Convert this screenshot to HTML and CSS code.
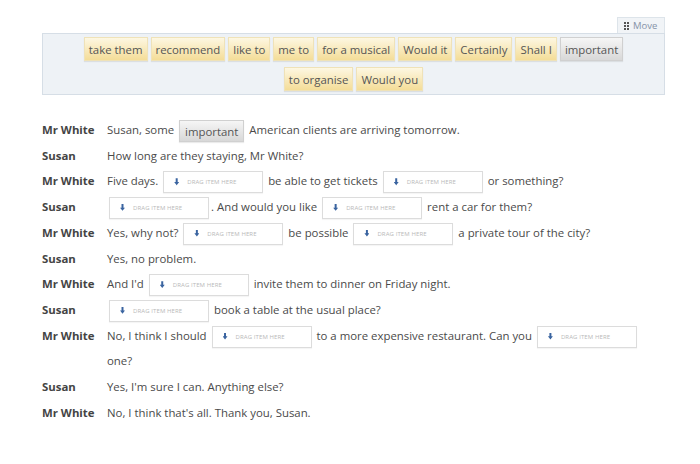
FILE: index.html
```html
<!DOCTYPE html>
<html lang="en">
<head>
    <meta charset="UTF-8">
    <title>Dialogue - drag and drop</title>
    <link rel="stylesheet" href="styles.css">
</head>
<body>
    <div class="page">
        <div class="options-wrap">
            <div class="move-tab">
                <svg class="grip" width="5" height="8" viewBox="0 0 5 8">
                    <rect x="0" y="0" width="2" height="2"/><rect x="3" y="0" width="2" height="2"/>
                    <rect x="0" y="3" width="2" height="2"/><rect x="3" y="3" width="2" height="2"/>
                    <rect x="0" y="6" width="2" height="2"/><rect x="3" y="6" width="2" height="2"/>
                </svg>
                Move
            </div>
            <div class="options">
                <span class="item">take them</span>
                <span class="item">recommend</span>
                <span class="item">like to</span>
                <span class="item">me to</span>
                <span class="item">for a musical</span>
                <span class="item">Would it</span>
                <span class="item">Certainly</span>
                <span class="item">Shall I</span>
                <span class="item used">important</span>
                <span class="item">to organise</span>
                <span class="item">Would you</span>
            </div>
        </div>

        <div class="dialogue">
            <div class="speaker">Mr White</div>
            <div class="line">Susan, some <span class="item used placed">important</span> American clients are arriving tomorrow.</div>

            <div class="speaker">Susan</div>
            <div class="line">How long are they staying, Mr White?</div>

            <div class="speaker">Mr White</div>
            <div class="line">Five days. <span class="drop"><i class="arrow"></i>Drag item here</span> be able to get tickets <span class="drop"><i class="arrow"></i>Drag item here</span> or something?</div>

            <div class="speaker">Susan</div>
            <div class="line"><span class="drop"><i class="arrow"></i>Drag item here</span>. And would you like <span class="drop"><i class="arrow"></i>Drag item here</span> rent a car for them?</div>

            <div class="speaker">Mr White</div>
            <div class="line">Yes, why not? <span class="drop"><i class="arrow"></i>Drag item here</span> be possible <span class="drop"><i class="arrow"></i>Drag item here</span> a private tour of the city?</div>

            <div class="speaker">Susan</div>
            <div class="line">Yes, no problem.</div>

            <div class="speaker">Mr White</div>
            <div class="line">And I'd <span class="drop"><i class="arrow"></i>Drag item here</span> invite them to dinner on Friday night.</div>

            <div class="speaker">Susan</div>
            <div class="line"><span class="drop"><i class="arrow"></i>Drag item here</span> book a table at the usual place?</div>

            <div class="speaker">Mr White</div>
            <div class="line">No, I think I should <span class="drop"><i class="arrow"></i>Drag item here</span> to a more expensive restaurant. Can you <span class="drop"><i class="arrow"></i>Drag item here</span> one?</div>

            <div class="speaker">Susan</div>
            <div class="line">Yes, I'm sure I can. Anything else?</div>

            <div class="speaker">Mr White</div>
            <div class="line">No, I think that's all. Thank you, Susan.</div>
        </div>
    </div>
</body>
</html>
```

FILE: styles.css
```css
* {
    margin: 0;
    padding: 0;
    box-sizing: border-box;
}

body {
    font-family: 'Open Sans', 'Noto Sans', sans-serif;
    font-size: 11.4px;
    color: #4a4a4a;
    background: #fff;
}

.page {
    width: 623px;
    margin-left: 42px;
    padding-top: 17px;
}

/* draggable words */
.options-wrap {
    display: flex;
    flex-direction: column;
    align-items: flex-end;
}

.move-tab {
    display: flex;
    align-items: center;
    gap: 4px;
    height: 16px;
    width: 48px;
    padding-left: 6px;
    background: #f1f4f7;
    border: 1px solid #dde4ea;
    border-bottom: none;
    font-size: 9.5px;
    color: #8593a8;
}

.grip {
    fill: #555;
}

.options {
    width: 100%;
    display: flex;
    flex-wrap: wrap;
    justify-content: center;
    gap: 6px 3px;
    padding: 3px 8px;
    background: #eef2f6;
    border: 1px solid #d6dee6;
}

.item {
    display: inline-block;
    height: 24px;
    line-height: 23px;
    padding: 0 4px;
    color: #555;
    background: linear-gradient(#fdf7e2, #f4dd98);
    border: 1px solid #efe2b8;
    box-shadow: 0 1px 1px rgba(0, 0, 0, 0.08);
}

.item.used {
    background: linear-gradient(#f6f6f6, #d8d8d8);
    border-color: #d0d0d0;
}

/* dialogue */
.dialogue {
    display: grid;
    grid-template-columns: 65px 1fr;
    margin-top: 22px;
    line-height: 25.7px;
}

.speaker {
    font-weight: bold;
    color: #444;
}

.item.placed {
    height: 22px;
    line-height: 21px;
    padding: 0 5px;
    vertical-align: middle;
    margin: 0 2px;
}

.drop {
    display: inline-flex;
    align-items: center;
    vertical-align: middle;
    width: 100px;
    height: 22px;
    margin: 0 2px;
    padding-left: 10px;
    background: #fff;
    border: 1px solid #dcdcdc;
    box-shadow: 0 1px 1px rgba(0, 0, 0, 0.04);
    font-size: 6px;
    line-height: 1;
    letter-spacing: 0.1px;
    text-transform: uppercase;
    color: #b9b9b9;
}

.arrow {
    display: inline-block;
    width: 5px;
    height: 8px;
    margin-right: 8px;
    background: #3a64a0;
    clip-path: polygon(30% 0, 70% 0, 70% 45%, 100% 45%, 50% 85%, 0 45%, 30% 45%);
    border-bottom: 1px solid #3a64a0;
}
```
